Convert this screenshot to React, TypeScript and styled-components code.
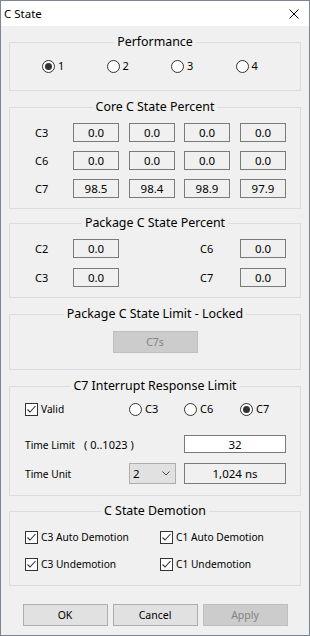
import React from 'react';
import styled, { createGlobalStyle } from 'styled-components';

const GlobalStyle = createGlobalStyle`
  html, body {
    margin: 0;
    padding: 0;
    background: #f0f0f0;
  }
  * {
    box-sizing: border-box;
  }
`;

const Window = styled.div`
  width: 310px;
  height: 636px;
  border: 1px solid #7b8595;
  background: #f0f0f0;
  display: flex;
  flex-direction: column;
  font-family: "Noto Sans", "Open Sans", sans-serif;
  color: #000;
`;

const TitleBar = styled.div`
  height: 25px;
  background: #fff;
  display: flex;
  align-items: center;
  justify-content: space-between;
  padding: 0 10px 0 3px;
  font-size: 11.5px;
`;

const Content = styled.div`
  padding: 0 8px;
  display: flex;
  flex-direction: column;
`;

const Group = styled.fieldset<{ $mt: number; $pt: number; $pb: number }>`
  margin: ${p => p.$mt}px 0 0;
  padding: ${p => p.$pt}px 0 ${p => p.$pb}px;
  border: 1px solid #dcdcdc;
  min-width: 0;
`;

const Legend = styled.legend`
  margin: 0 auto;
  padding: 0 3px;
  font-size: 12.4px;
  line-height: 16px;
`;

const RadioRow = styled.div`
  display: flex;
  align-items: center;
  height: 16px;
  padding-left: 32px;
`;

const RadioLabel = styled.label<{ $width?: number }>`
  display: inline-flex;
  align-items: center;
  gap: 3px;
  width: ${p => (p.$width ? `${p.$width}px` : 'auto')};
  font-size: 11px;
  line-height: 16px;
`;

const RadioCircle = styled.span<{ $on: boolean }>`
  width: 13px;
  height: 13px;
  border-radius: 50%;
  border: 1px solid #333;
  background: #fff;
  display: flex;
  align-items: center;
  justify-content: center;
  flex: none;

  &::after {
    content: '';
    width: 7px;
    height: 7px;
    border-radius: 50%;
    background: #333;
    display: ${p => (p.$on ? 'block' : 'none')};
  }
`;

const CheckLabel = styled.label`
  display: inline-flex;
  align-items: center;
  gap: 3px;
  font-size: 10.2px;
  line-height: 16px;
`;

const CheckBox = styled.span`
  width: 13px;
  height: 13px;
  border: 1px solid #333;
  background: #fff;
  display: flex;
  flex: none;
`;

const ValueGrid = styled.div<{ $cols: string; $gap: number }>`
  display: grid;
  grid-template-columns: ${p => p.$cols};
  grid-auto-rows: 19px;
  row-gap: ${p => p.$gap}px;
  align-items: center;
  padding-left: 25px;
`;

const StateLabel = styled.span`
  font-size: 11px;
`;

const ValueBox = styled.div<{ $white?: boolean; $span?: boolean }>`
  width: ${p => (p.$span ? 'auto' : '46px')};
  height: 100%;
  border: 1px solid #7a7a7a;
  background: ${p => (p.$white ? '#fff' : '#f0f0f0')};
  display: flex;
  align-items: center;
  justify-content: center;
  font-size: 11.5px;
  grid-column: ${p => (p.$span ? 'span 2' : 'auto')};
`;

const Center = styled.div`
  display: flex;
  justify-content: center;
`;

const Button = styled.button<{ $disabled?: boolean }>`
  width: 85px;
  height: 22px;
  border: 1px solid ${p => (p.$disabled ? '#bfbfbf' : '#adadad')};
  background: ${p => (p.$disabled ? '#cccccc' : '#e1e1e1')};
  color: ${p => (p.$disabled ? '#838383' : '#000')};
  font-family: "Noto Sans", "Open Sans", sans-serif;
  font-size: 10.5px;
  padding: 0;
  cursor: default;
`;

const IrqRow = styled.div<{ $h: number; $mt: number }>`
  display: grid;
  grid-template-columns: 104px 55px 56px 46px;
  height: ${p => p.$h}px;
  margin-top: ${p => p.$mt}px;
  align-items: center;
  padding-left: 15px;
`;

const SmallText = styled.span<{ $span?: boolean }>`
  font-size: 10.2px;
  grid-column: ${p => (p.$span ? 'span 2' : 'auto')};
  white-space: pre;
`;

const Range = styled.span`
  font-size: 11px;
  margin-left: 9px;
`;

const Select = styled.div`
  width: 47px;
  height: 100%;
  border: 1px solid #adadad;
  background: #e1e1e1;
  display: flex;
  align-items: center;
  justify-content: space-between;
  padding: 0 5px 0 3px;
  font-size: 11.5px;
`;

const DemotionGrid = styled.div`
  display: grid;
  grid-template-columns: 135px 1fr;
  grid-auto-rows: 16px;
  row-gap: 11px;
  align-items: center;
  padding-left: 15px;
`;

const ButtonBar = styled.div`
  display: flex;
  justify-content: center;
  gap: 5px;
  margin-top: 18px;
`;

const Radio = ({ label, on, width }: { label: string; on?: boolean; width?: number }) => (
  <RadioLabel $width={width}>
    <RadioCircle $on={!!on} />
    {label}
  </RadioLabel>
);

const Check = ({ label }: { label: string }) => (
  <CheckLabel>
    <CheckBox>
      <svg width="11" height="11" viewBox="0 0 11 11">
        <polyline points="1.5,5.5 4,8 9.5,2" fill="none" stroke="#333" strokeWidth="1.1" />
      </svg>
    </CheckBox>
    {label}
  </CheckLabel>
);

const core = [
  { name: 'C3', values: ['0.0', '0.0', '0.0', '0.0'] },
  { name: 'C6', values: ['0.0', '0.0', '0.0', '0.0'] },
  { name: 'C7', values: ['98.5', '98.4', '98.9', '97.9'] },
];

export default function App() {
  return (
    <>
      <GlobalStyle />
      <Window>
        <TitleBar>
          <span>C State</span>
          <svg width="10" height="10" viewBox="0 0 10 10">
            <path d="M0.5 0.5 L9.5 9.5 M9.5 0.5 L0.5 9.5" stroke="#000" strokeWidth="1" />
          </svg>
        </TitleBar>
        <Content>
          <Group $mt={8} $pt={8} $pb={16}>
            <Legend>Performance</Legend>
            <RadioRow>
              <Radio label="1" on width={66} />
              <Radio label="2" width={66} />
              <Radio label="3" width={66} />
              <Radio label="4" width={66} />
            </RadioRow>
          </Group>

          <Group $mt={8} $pt={8} $pb={10}>
            <Legend>Core C State Percent</Legend>
            <ValueGrid $cols="38px 56px 55px 56px 46px" $gap={9}>
              {core.map(row => (
                <React.Fragment key={row.name}>
                  <StateLabel>{row.name}</StateLabel>
                  {row.values.map((v, i) => (
                    <ValueBox key={i}>{v}</ValueBox>
                  ))}
                </React.Fragment>
              ))}
            </ValueGrid>
          </Group>

          <Group $mt={6} $pt={8} $pb={10}>
            <Legend>Package C State Percent</Legend>
            <ValueGrid $cols="38px 127px 40px 46px" $gap={10}>
              <StateLabel>C2</StateLabel>
              <ValueBox>0.0</ValueBox>
              <StateLabel>C6</StateLabel>
              <ValueBox>0.0</ValueBox>
              <StateLabel>C3</StateLabel>
              <ValueBox>0.0</ValueBox>
              <StateLabel>C7</StateLabel>
              <ValueBox>0.0</ValueBox>
            </ValueGrid>
          </Group>

          <Group $mt={8} $pt={9} $pb={16}>
            <Legend>Package C State Limit - Locked</Legend>
            <Center>
              <Button $disabled>C7s</Button>
            </Center>
          </Group>

          <Group $mt={8} $pt={7} $pb={11}>
            <Legend>C7 Interrupt Response Limit</Legend>
            <IrqRow $h={16} $mt={0}>
              <Check label="Valid" />
              <Radio label="C3" />
              <Radio label="C6" />
              <Radio label="C7" on />
            </IrqRow>
            <IrqRow $h={18} $mt={18}>
              <SmallText $span>
                Time Limit<Range>( 0..1023 )</Range>
              </SmallText>
              <ValueBox $white $span>32</ValueBox>
            </IrqRow>
            <IrqRow $h={21} $mt={10}>
              <SmallText>Time Unit</SmallText>
              <Select>
                <span>2</span>
                <svg width="8" height="5" viewBox="0 0 8 5">
                  <polyline points="0.5,0.5 4,4 7.5,0.5" fill="none" stroke="#444" strokeWidth="1" />
                </svg>
              </Select>
              <ValueBox $span>1,024 ns</ValueBox>
            </IrqRow>
          </Group>

          <Group $mt={7} $pt={10} $pb={13}>
            <Legend>C State Demotion</Legend>
            <DemotionGrid>
              <Check label="C3 Auto Demotion" />
              <Check label="C1 Auto Demotion" />
              <Check label="C3 Undemotion" />
              <Check label="C1 Undemotion" />
            </DemotionGrid>
          </Group>

          <ButtonBar>
            <Button>OK</Button>
            <Button>Cancel</Button>
            <Button $disabled>Apply</Button>
          </ButtonBar>
        </Content>
      </Window>
    </>
  );
}
